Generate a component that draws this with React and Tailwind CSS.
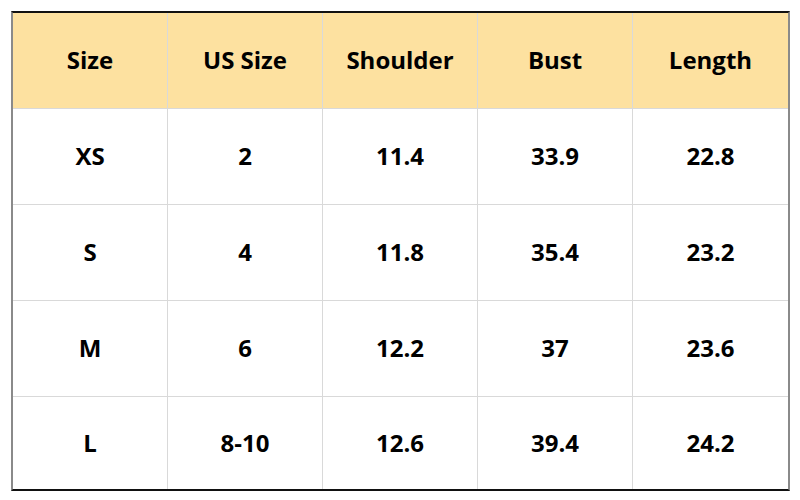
const headers = ["Size", "US Size", "Shoulder", "Bust", "Length"];
const rows = [
  ["XS", "2", "11.4", "33.9", "22.8"],
  ["S", "4", "11.8", "35.4", "23.2"],
  ["M", "6", "12.2", "37", "23.6"],
  ["L", "8-10", "12.6", "39.4", "24.2"],
];

export default function App() {
  return (
    <div className="w-[800px] h-[500px] bg-white pt-[11px] pl-[11px]">
      <div className="w-[779px] border-t-2 border-b-2 border-t-[#111] border-b-[#111] border-l-2 border-r-2 border-l-[#8a8a8a] border-r-[#8a8a8a]">
        <div className="grid grid-cols-5 bg-[#fde1a0]">
          {headers.map((h, i) => (
            <div
              key={h}
              className={`h-[96px] pb-[2px] flex items-center justify-center text-[24px] font-bold text-black border-b border-[#d9d9d9] ${i < 4 ? "border-r" : ""}`}
              style={{ fontFamily: '"Open Sans", sans-serif' }}
            >
              {h}
            </div>
          ))}
        </div>
        {rows.map((r, ri) => (
          <div key={ri} className="grid grid-cols-5 bg-white">
            {r.map((c, ci) => (
              <div
                key={ci}
                className={`flex items-center justify-center text-[24px] font-bold text-black border-[#d9d9d9] ${ci < 4 ? "border-r" : ""} ${ri < 3 ? "border-b h-[96px] pb-[2px]" : "h-[92px]"}`}
                style={{ fontFamily: '"Open Sans", sans-serif' }}
              >
                {c}
              </div>
            ))}
          </div>
        ))}
      </div>
    </div>
  );
}
